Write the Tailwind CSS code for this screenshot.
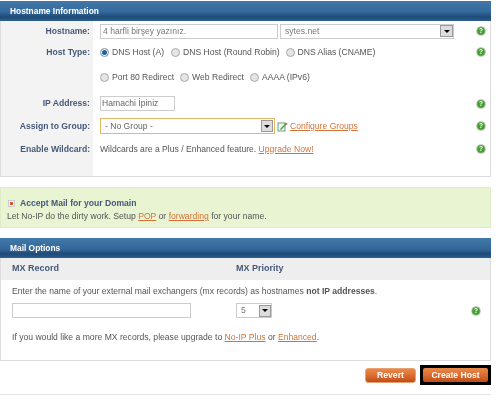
<!DOCTYPE html>
<html lang="en">
<head>
  <meta charset="UTF-8" />
  <title>No-IP - Add Host</title>
  <script src="https://cdn.jsdelivr.net/npm/@tailwindcss/browser@4"></script>
</head>
<body class="bg-white w-[500px] h-[400px] overflow-hidden font-['Liberation_Sans',Arial,sans-serif] text-[8.6px] text-[#555]">
  <div class="w-[491px] pt-px flex flex-col blur-[0.3px]">

    <!-- HOSTNAME INFORMATION -->
    <section class="h-[176px] border border-[#ddd] border-t-0 flex flex-col">
      <h2 class="h-[20px] -mx-px px-[10px] flex items-center shrink-0 text-[8.4px] font-bold text-white bg-[linear-gradient(#4279aa,#34689a_55%,#1e4a78_80%,#2c5f90)]">Hostname Information</h2>
      <div class="flex-1 grid grid-cols-[92px_1fr] grid-rows-[20px_22px_28px_25px_20px_26px_1fr]">
        <div class="bg-[#f3f3f3] flex items-center justify-end pr-[3px] font-bold text-[#46587a]">Hostname:</div>
        <div class="flex items-center pl-[7px] pr-[3px]">
          <div class="w-[178px] h-[15px] border border-[#ccc] flex items-center px-[2px] text-[#777]">4 harfli birşey yazınız.</div>
          <div class="w-[174px] h-[15px] ml-[2px] border border-[#ccc] flex items-center justify-between pl-[4px] text-[#777]">
            sytes.net
            <span class="w-[13px] h-[12px] bg-[#ddd] border border-[#999] flex items-center justify-center"><span class="border-x-[3px] border-t-[3px] border-x-transparent border-t-black"></span></span>
          </div>
          <svg class="ml-auto mr-[1px]" width="10" height="10" viewBox="0 0 10 10"><circle cx="5" cy="5" r="4.8" fill="#bbb"/><circle cx="5" cy="5" r="3.8" fill="#3fa32a"/><text x="5" y="7.2" font-size="6.5" font-weight="700" text-anchor="middle" fill="#fff">?</text></svg>
        </div>

        <div class="bg-[#f3f3f3] flex items-center justify-end pr-[3px] font-bold text-[#46587a]">Host Type:</div>
        <div class="flex items-center pl-[7px] pr-[3px]">
          <span class="w-[9px] h-[9px] rounded-full border border-[#aaa] bg-[#1f5f9a] shadow-[inset_0_0_0_1px_#fff] mr-[3px]"></span>
          <span class="mr-[7px]">DNS Host (A)</span>
          <span class="w-[9px] h-[9px] rounded-full border border-[#aaa] bg-[#e4e4e4] mr-[3px]"></span>
          <span class="mr-[6px]">DNS Host (Round Robin)</span>
          <span class="w-[9px] h-[9px] rounded-full border border-[#aaa] bg-[#e4e4e4] mr-[3px]"></span>
          <span>DNS Alias (CNAME)</span>
          <svg class="ml-auto mr-[1px]" width="10" height="10" viewBox="0 0 10 10"><circle cx="5" cy="5" r="4.8" fill="#bbb"/><circle cx="5" cy="5" r="3.8" fill="#3fa32a"/><text x="5" y="7.2" font-size="6.5" font-weight="700" text-anchor="middle" fill="#fff">?</text></svg>
        </div>

        <div class="bg-[#f3f3f3]"></div>
        <div class="flex items-center pl-[7px]">
          <span class="w-[9px] h-[9px] rounded-full border border-[#aaa] bg-[#e4e4e4] mr-[3px]"></span>
          <span class="mr-[6px]">Port 80 Redirect</span>
          <span class="w-[9px] h-[9px] rounded-full border border-[#aaa] bg-[#e4e4e4] mr-[3px]"></span>
          <span class="mr-[6px]">Web Redirect</span>
          <span class="w-[9px] h-[9px] rounded-full border border-[#aaa] bg-[#e4e4e4] mr-[3px]"></span>
          <span>AAAA (IPv6)</span>
        </div>

        <div class="bg-[#f3f3f3] flex items-center justify-end pr-[3px] font-bold text-[#46587a]">IP Address:</div>
        <div class="flex items-center pl-[7px] pr-[3px]">
          <div class="w-[75px] h-[15px] border border-[#ccc] flex items-center px-[1px] text-[#666]">Hamachi İpiniz</div>
          <svg class="ml-auto mr-[1px]" width="10" height="10" viewBox="0 0 10 10"><circle cx="5" cy="5" r="4.8" fill="#bbb"/><circle cx="5" cy="5" r="3.8" fill="#3fa32a"/><text x="5" y="7.2" font-size="6.5" font-weight="700" text-anchor="middle" fill="#fff">?</text></svg>
        </div>

        <div class="bg-[#f3f3f3] flex items-center justify-end pr-[3px] font-bold text-[#46587a]">Assign to Group:</div>
        <div class="flex items-center pl-[7px] pr-[3px]">
          <div class="w-[175px] h-[16px] border border-[#e8b763] flex items-center justify-between pl-[4px] pr-[1px] text-[#666]">
            - No Group -
            <span class="w-[12px] h-[12px] bg-[#ddd] border border-[#999] flex items-center justify-center"><span class="border-x-[3px] border-t-[3px] border-x-transparent border-t-black"></span></span>
          </div>
          <svg class="ml-[2px] mr-[2px]" width="11" height="11" viewBox="0 0 11 11"><rect x="1" y="2" width="7" height="8" fill="#eef6ea" stroke="#6f9a8c"/><path d="M3 8 9 2l1 1-6 6z" fill="#4d9f3c"/><path d="M8.6 1.4 10.6 3l-.8.7-1.8-1.6z" fill="#d8452f"/></svg>
          <a class="text-[#d2743a] underline">Configure Groups</a>
          <svg class="ml-auto mr-[1px]" width="10" height="10" viewBox="0 0 10 10"><circle cx="5" cy="5" r="4.8" fill="#bbb"/><circle cx="5" cy="5" r="3.8" fill="#3fa32a"/><text x="5" y="7.2" font-size="6.5" font-weight="700" text-anchor="middle" fill="#fff">?</text></svg>
        </div>

        <div class="bg-[#f3f3f3] flex items-center justify-end pr-[3px] font-bold text-[#46587a]">Enable Wildcard:</div>
        <div class="flex items-center pl-[7px] pr-[3px]">
          <span>Wildcards are a Plus / Enhanced feature. <a class="text-[#d2743a] underline">Upgrade Now!</a></span>
          <svg class="ml-auto mr-[1px]" width="10" height="10" viewBox="0 0 10 10"><circle cx="5" cy="5" r="4.8" fill="#bbb"/><circle cx="5" cy="5" r="3.8" fill="#3fa32a"/><text x="5" y="7.2" font-size="6.5" font-weight="700" text-anchor="middle" fill="#fff">?</text></svg>
        </div>

        <div class="bg-[#f3f3f3]"></div>
        <div></div>
      </div>
    </section>

    <!-- ACCEPT MAIL -->
    <section class="h-[41px] mt-[10px] bg-[#e8f4d2] border border-[#dfeac8] px-[6px] pt-[9px]">
      <div class="flex items-center h-[12px]">
        <span class="w-[7px] h-[7px] bg-white border border-[#ccc] flex items-center justify-center mr-[5px] ml-px"><span class="w-[3px] h-[3px] bg-[#d9552b]"></span></span>
        <span class="font-bold text-[#46587a]">Accept Mail for your Domain</span>
      </div>
      <p class="mt-px leading-[13px]">Let No-IP do the dirty work. Setup <a class="text-[#d2743a] underline">POP</a> or <a class="text-[#d2743a] underline">forwarding</a> for your name.</p>
    </section>

    <!-- MAIL OPTIONS -->
    <section class="h-[123px] mt-[10px] border border-[#ddd] border-t-0 flex flex-col">
      <h2 class="h-[20px] -mx-px px-[10px] flex items-center shrink-0 text-[8.4px] font-bold text-white bg-[linear-gradient(#4279aa,#34689a_55%,#1e4a78_80%,#2c5f90)]">Mail Options</h2>
      <div class="h-[22px] bg-[#eee] grid grid-cols-[224px_1fr] items-center px-[11px] text-[9px] font-bold text-[#46587a]">
        <span>MX Record</span>
        <span>MX Priority</span>
      </div>
      <p class="mt-[5px] ml-[11px] leading-[13px]">Enter the name of your external mail exchangers (mx records) as hostnames <b>not IP addresses</b>.</p>
      <div class="mt-[5px] ml-[11px] mr-[5px] flex items-center">
        <div class="w-[179px] h-[15px] border border-[#ccc]"></div>
        <div class="w-[36px] h-[15px] ml-[45px] border border-[#ccc] flex items-center justify-between pl-[4px] text-[#777]">
          5
          <span class="w-[12px] h-[12px] bg-[#ddd] border border-[#999] flex items-center justify-center"><span class="border-x-[3px] border-t-[3px] border-x-transparent border-t-black"></span></span>
        </div>
        <svg class="ml-auto mr-[4px]" width="10" height="10" viewBox="0 0 10 10"><circle cx="5" cy="5" r="4.8" fill="#bbb"/><circle cx="5" cy="5" r="3.8" fill="#3fa32a"/><text x="5" y="7.2" font-size="6.5" font-weight="700" text-anchor="middle" fill="#fff">?</text></svg>
      </div>
      <p class="mt-[13px] ml-[11px] leading-[13px]">If you would like a more MX records, please upgrade to <a class="text-[#d2743a] underline">No-IP Plus</a> or <a class="text-[#d2743a] underline">Enhanced</a>.</p>
    </section>

    <!-- ACTIONS -->
    <div class="mt-[4px] flex justify-end items-center">
      <button class="w-[51px] h-[15px] mr-[4px] rounded-[3px] text-white font-bold bg-[linear-gradient(#e98a4a,#d8662a_60%,#b84f1c)] border border-[#e8a070]">Revert</button>
      <div class="w-[71px] h-[20px] bg-black flex items-center justify-center">
        <button class="w-[65px] h-[14px] rounded-[2px] text-white font-bold bg-[linear-gradient(#e98a4a,#d8662a_60%,#b84f1c)]">Create Host</button>
      </div>
    </div>
    <div class="mt-[9px] h-px bg-[#e4e4e4]"></div>
  </div>
</body>
</html>
